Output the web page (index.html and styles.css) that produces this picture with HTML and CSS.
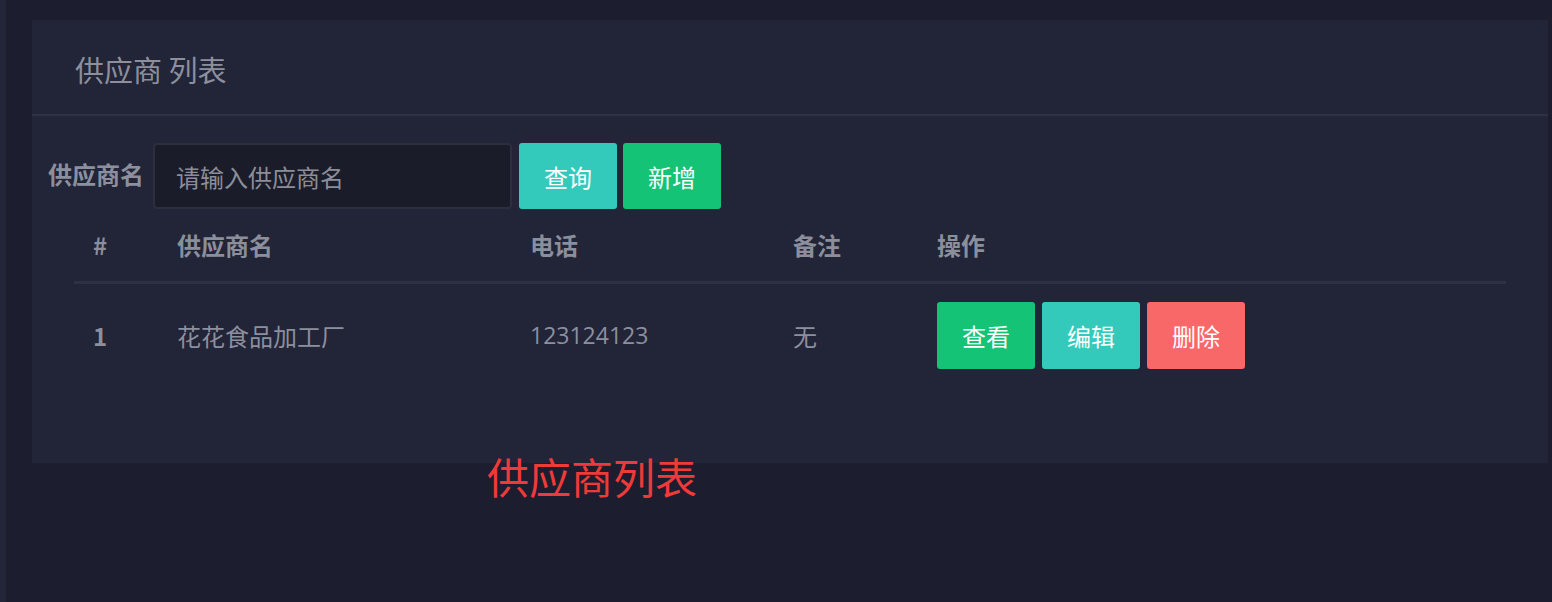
FILE: index.html
```html
<!DOCTYPE html>
<html lang="zh-CN">
<head>
<meta charset="utf-8">
<title>供应商列表</title>
<link rel="stylesheet" href="styles.css">
</head>
<body>
<div class="page">
  <div class="card">
    <div class="card-header">供应商 列表</div>
    <div class="card-body">
      <form class="search">
        <label class="search-label">供应商名</label>
        <input class="search-input" type="text" placeholder="请输入供应商名">
        <button type="button" class="btn btn-teal">查询</button>
        <button type="button" class="btn btn-green">新增</button>
      </form>
      <table class="table">
        <colgroup>
          <col class="c1"><col class="c2"><col class="c3"><col class="c4"><col>
        </colgroup>
        <thead>
          <tr><th>#</th><th>供应商名</th><th>电话</th><th>备注</th><th>操作</th></tr>
        </thead>
        <tbody>
          <tr>
            <td class="num">1</td>
            <td>花花食品加工厂</td>
            <td class="digits">123124123</td>
            <td>无</td>
            <td class="ops">
              <button type="button" class="btn btn-green">查看</button>
              <button type="button" class="btn btn-teal">编辑</button>
              <button type="button" class="btn btn-red">删除</button>
            </td>
          </tr>
        </tbody>
      </table>
    </div>
  </div>
  <div class="caption">供应商列表</div>
</div>
</body>
</html>
```
FILE: styles.css
```css
html, body {
  margin: 0;
  padding: 0;
}
body {
  background: #1c1d2e;
  border-left: 6px solid #232539;
  min-height: 602px;
  box-sizing: border-box;
  font-family: "Noto Sans CJK SC", "Noto Sans", sans-serif;
  color: #8c8f9d;
}
.page {
  padding: 20px 4px 0 26px;
}
.card {
  background: #222437;
  height: 443px;
  display: flex;
  flex-direction: column;
}
.card-header {
  height: 94px;
  border-bottom: 2px solid #2e3045;
  padding-left: 43px;
  font-size: 29px;
  line-height: 98px;
  color: #8d909c;
}
.card-body {
  padding: 27px 0 0 16px;
}
.search {
  display: flex;
  align-items: center;
  margin: 0;
}
.search-label {
  font-size: 24px;
  font-weight: bold;
  width: 105px;
  color: #8c8f9d;
  line-height: 1;
  margin-top: -4px;
}
.search-input {
  box-sizing: border-box;
  width: 359px;
  height: 66px;
  background: #1b1c29;
  border: 2px solid #2d2e3e;
  border-radius: 4px;
  padding: 0 0 0 21px;
  font-family: inherit;
  font-size: 24px;
  color: #8c8f9d;
  outline: none;
  margin-right: 7px;
}
.search-input::placeholder {
  color: #8b8e99;
}
.btn {
  box-sizing: border-box;
  width: 98px;
  height: 66px;
  border: 0;
  border-radius: 3px;
  color: #fff;
  font-family: inherit;
  font-size: 24px;
  padding: 0;
  cursor: pointer;
}
.search .btn + .btn {
  margin-left: 6px;
}
.btn-teal { background: #33cabb; }
.btn-green { background: #15c377; }
.btn-red { background: #f96868; }

.table {
  margin: 4px 0 0 26px;
  width: 1432px;
  border-collapse: collapse;
  table-layout: fixed;
}
.c1 { width: 84px; }
.c2 { width: 353px; }
.c3 { width: 263px; }
.c4 { width: 144px; }
.table th {
  box-sizing: border-box;
  text-align: left;
  font-size: 24px;
  font-weight: bold;
  height: 69px;
  padding: 0 0 5px 19px;
  border-bottom: 3px solid #2e3044;
  color: #8b8e9b;
  vertical-align: middle;
}
.table td {
  font-size: 24px;
  padding: 18px 0 18px 19px;
  vertical-align: middle;
  color: #8c8f9d;
}
.table td.num {
  font-weight: bold;
}
.table td.digits {
  font-family: "Open Sans", "Noto Sans CJK SC", sans-serif;
  font-size: 23px;
}
.ops {
  display: flex;
  gap: 7px;
}
.ops .btn {
  height: 67px;
}
.caption {
  margin: -8px 0 0 455px;
  font-size: 42px;
  line-height: 1;
  color: #ef3a3a;
  position: relative;
}
```
